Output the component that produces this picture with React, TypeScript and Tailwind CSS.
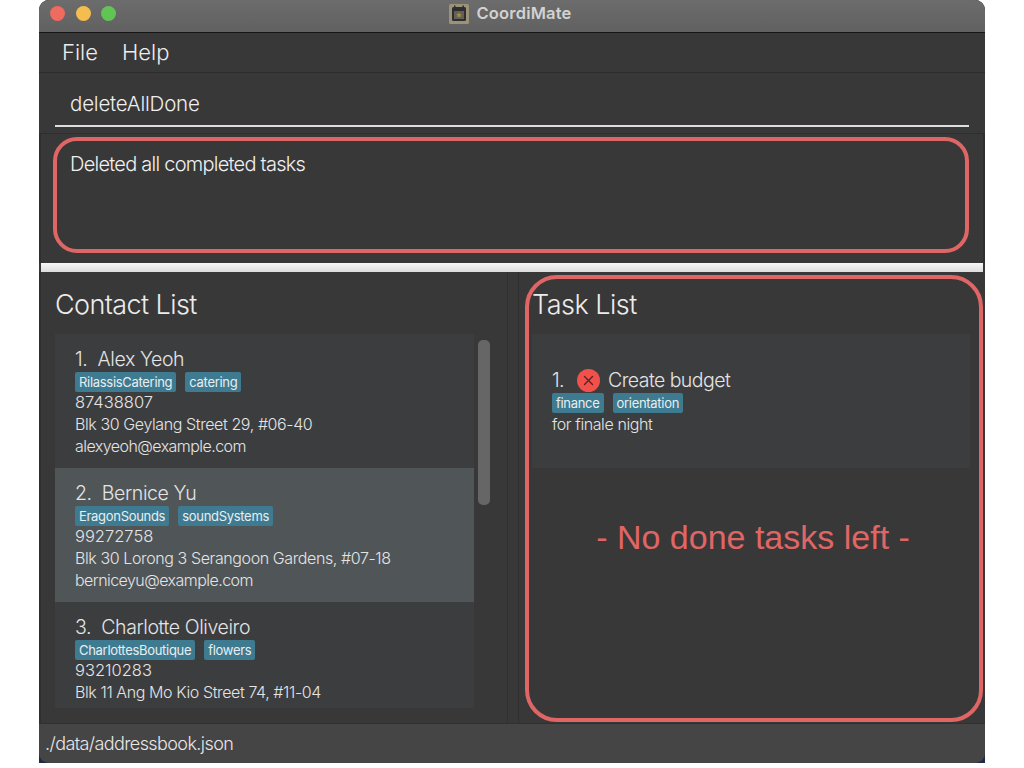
const FONT = "font-['Inter','Liberation_Sans',sans-serif]"

type Contact = { name: string; tags: string[]; phone: string; address: string; email: string }

const CONTACTS: Contact[] = [
  { name: 'Alex Yeoh', tags: ['RilassisCatering', 'catering'], phone: '87438807', address: 'Blk 30 Geylang Street 29, #06-40', email: 'alexyeoh@example.com' },
  { name: 'Bernice Yu', tags: ['EragonSounds', 'soundSystems'], phone: '99272758', address: 'Blk 30 Lorong 3 Serangoon Gardens, #07-18', email: 'berniceyu@example.com' },
  { name: 'Charlotte Oliveiro', tags: ['CharlottesBoutique', 'flowers'], phone: '93210283', address: 'Blk 11 Ang Mo Kio Street 74, #11-04', email: 'charlotte@example.com' },
]

const Tags = ({ tags }: { tags: string[] }) => (
  <div className="flex gap-[9px] h-[20px] items-center">
    {tags.map((tag) => (
      <span key={tag} className="h-[20px] px-[4px] rounded-[2px] bg-[#3e7b91] text-[13px] leading-[20px] text-[#e8eef0] tracking-[-0.3px]">{tag}</span>
    ))}
  </div>
)

const ContactCard = ({ contact, index, selected }: { contact: Contact; index: number; selected: boolean }) => (
  <div className={`h-[134px] shrink-0 pl-[20px] pt-[12px] text-[#e4e4e4] ${selected ? 'bg-[#505558]' : ''}`}>
    <div className="text-[19.5px] leading-[26px] font-light whitespace-pre tracking-[-0.4px]">{index + 1}.  {contact.name}</div>
    <Tags tags={contact.tags} />
    <div className="text-[16.5px] leading-[21px] font-light">{contact.phone}</div>
    <div className="text-[16px] leading-[22px] font-light tracking-[-0.4px]">{contact.address}</div>
    <div className="text-[16px] leading-[22px] font-light tracking-[-0.55px]">{contact.email}</div>
  </div>
)

const CalendarIcon = () => (
  <svg width="20" height="20" viewBox="0 0 20 20">
    <rect width="20" height="20" rx="1.5" fill="#9c927a" />
    <rect x="3" y="3" width="14" height="14" rx="1.5" fill="#2e2e2e" />
    <rect x="5" y="1.5" width="1.5" height="3" fill="#2e2e2e" />
    <rect x="13.5" y="1.5" width="1.5" height="3" fill="#2e2e2e" />
    <rect x="5" y="7" width="10" height="8" fill="#62605a" />
    <path d="M10 8.2l.9 1.8 1.9.2-1.4 1.3.4 1.9-1.8-1-1.8 1 .4-1.9-1.4-1.3 1.9-.2z" fill="#a88c3c" />
  </svg>
)

const App = () => {
  return (
    <div className={`w-[1024px] h-[768px] bg-white overflow-hidden pl-[39px] ${FONT}`}>
      <div className="w-[946px] h-[763px] bg-[#1f2a44] rounded-t-[10px]">
        <div className="relative w-full h-full flex flex-col rounded-[10px] overflow-hidden bg-[#383838]">
          {/* title bar */}
          <div className="relative h-[33px] shrink-0 bg-gradient-to-b from-[#6c6c6c] to-[#616161] border-b border-[#161616] flex items-center justify-center">
            <div className="absolute left-[11px] top-[6px] flex gap-[10.5px]">
              <span className="w-[15px] h-[15px] rounded-full bg-[#ef6a5f]" />
              <span className="w-[15px] h-[15px] rounded-full bg-[#f5bd4f]" />
              <span className="w-[15px] h-[15px] rounded-full bg-[#61c454]" />
            </div>
            <div className="flex items-center gap-[7px] -mt-[5px] -ml-[3px]">
              <CalendarIcon />
              <span className="text-[16.5px] font-semibold text-[#d2d2d2] tracking-[0.2px]">CoordiMate</span>
            </div>
          </div>

          {/* menu */}
          <div className="h-[40px] shrink-0 border-b border-[#2c2c2c] flex items-center gap-[24px] pl-[23px] text-[22px] font-light text-[#ededed]">
            <span>File</span>
            <span>Help</span>
          </div>

          {/* command box */}
          <div className="h-[61px] shrink-0 pl-[16px] pr-[16px] border-b border-[#2e2e2e]">
            <div className="h-[54px] border-b-2 border-[#dedede] pl-[15px] pt-[14px] text-[20.5px] leading-[34px] font-light text-[#efefef] tracking-[-0.2px]">deleteAllDone</div>
          </div>

          {/* result box */}
          <div className="h-[129px] shrink-0 pl-[12px] pr-[14px] pt-[3px] border-l-2 border-r-2 border-[#2f2f2f]">
            <div className="h-[116px] border-[4px] border-[#e06666] rounded-[24px] pl-[13px] pt-[9px] text-[20px] leading-[28px] font-light text-[#f0f0f0] tracking-[-0.75px]">Deleted all completed tasks</div>
          </div>

          {/* split divider */}
          <div className="h-[9px] shrink-0 mx-[2px] bg-gradient-to-b from-[#f8f8f8] to-[#dcdcdc]" />

          {/* lower panes */}
          <div className="flex-1 min-h-0 flex">
            <div className="w-[468px] shrink-0 pl-[14px] border-l-2 border-[#2f2f2f]">
              <h2 className="h-[62px] pt-[14px] text-[27px] leading-[38px] font-light text-[#ececec] tracking-[-0.6px]">Contact List</h2>
              <div className="flex h-[374px] gap-[4px]">
                <div className="w-[419px] bg-[#3c3d3f] overflow-hidden flex flex-col">
                  {CONTACTS.map((contact, i) => (
                    <ContactCard key={contact.name} contact={contact} index={i} selected={i === 1} />
                  ))}
                </div>
                <div className="pt-[6px]">
                  <div className="w-[12px] h-[165px] rounded-[5px] bg-[#666666]" />
                </div>
              </div>
            </div>

            <div className="w-[12px] shrink-0 border-l border-r border-[#2f2f2f]" />

            <div className="flex-1 pl-[13px] pr-[15px]">
              <h2 className="h-[62px] pt-[14px] text-[27px] leading-[38px] font-light text-[#ececec] tracking-[-0.5px]">Task List</h2>
              <div className="h-[134px] bg-[#3c3d3f] pl-[20px] pt-[34px] text-[#e4e4e4]">
                <div className="flex items-center h-[25px] text-[19.5px] font-light tracking-[-0.55px]">
                  <span className="w-[25px]">1.</span>
                  <span className="w-[23px] h-[23px] rounded-full bg-[#f1504b] flex items-center justify-center">
                    <svg width="11" height="11" viewBox="0 0 11 11" fill="none" stroke="#5b2326" strokeWidth="1.4" strokeLinecap="round">
                      <path d="M1.5 1.5l8 8M9.5 1.5l-8 8" />
                    </svg>
                  </span>
                  <span className="ml-[8px]">Create budget</span>
                </div>
                <Tags tags={['finance', 'orientation']} />
                <div className="text-[16px] leading-[22px] font-light tracking-[-0.4px]">for finale night</div>
              </div>
              <div className="mt-[49px] pl-[4px] text-center font-['Liberation_Sans',sans-serif] text-[34px] leading-[40px] text-[#e06666]">- No done tasks left -</div>
            </div>

            {/* annotation outline over the task pane */}
            <div className="absolute left-[486px] top-[275px] w-[458px] h-[447px] border-[4px] border-[#e06666] rounded-[32px]" />
          </div>

          {/* status bar */}
          <div className="h-[40px] shrink-0 bg-[#454545] border-t border-[#303030] pl-[6px] text-[18px] leading-[39px] font-light text-[#e8e8e8] tracking-[-0.6px]">./data/addressbook.json</div>
        </div>
      </div>
    </div>
  )
}

export default App
